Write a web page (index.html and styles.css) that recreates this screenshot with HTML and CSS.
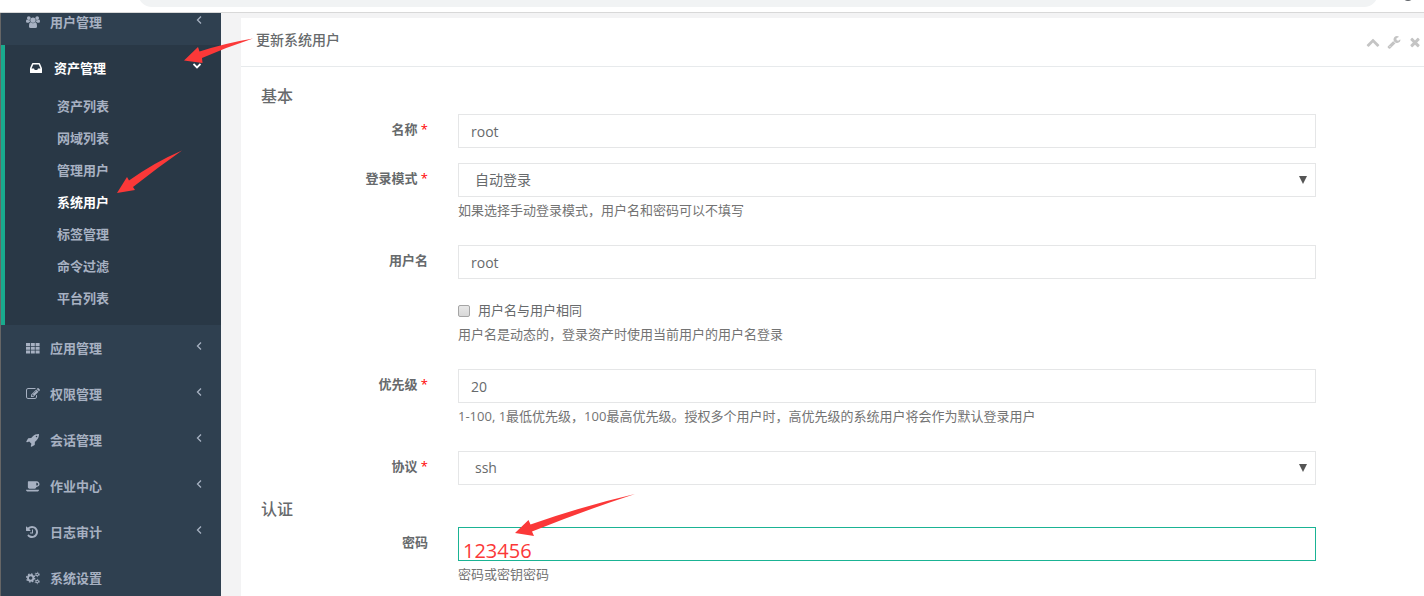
FILE: index.html
```html
<!DOCTYPE html>
<html lang="zh-CN">
<head>
<meta charset="utf-8">
<title>更新系统用户</title>
<link rel="stylesheet" href="styles.css">
</head>
<body>
<div class="browser-bar"><div class="address"></div><div class="avatar"></div></div>
<div class="app">
  <nav class="sidebar">
    <ul class="menu">
      <li><a class="item" href="#">
        <svg class="icon" viewBox="0 0 15 14"><circle cx="7.5" cy="5" r="2.8"/><circle cx="3" cy="2.8" r="2"/><circle cx="12" cy="2.8" r="2"/><path d="M3.2 11.8Q3.2 7.6 5 7.4Q7.5 9.3 10 7.4Q11.800 7.600 11.800 11.800Q11.800 13.500 10 13.500H5Q3.200 13.500 3.200 11.800ZM0 6.500Q0 4.300 1 4.300Q2.500 5.500 4 5Q4 6.200 4.600 6.800Q3.500 6.900 2.800 7.800H1.300Q0 7.800 0 6.500ZM15 6.500Q15 4.300 14 4.300Q12.500 5.500 11 5Q11 6.200 10.400 6.800Q11.500 6.900 12.200 7.800H13.700Q15 7.800 15 6.500Z"/></svg>
        <span>用户管理</span><svg class="arrow" viewBox="0 0 6 8"><path d="M5 .5L1.500 4L5 7.500"/></svg></a></li>
      <li class="active"><a class="item" href="#">
        <svg class="icon" viewBox="128 0 1792 1792"><path fill-rule="evenodd" d="M1151 960H1467L1250 448H542L325 960H641L736 1152H1056ZM1664 990V1472Q1664 1536 1600 1536H192Q128 1536 128 1472V990Q128 928 153 867L391 315Q416 256 480 256H1312Q1376 256 1401 315L1639 867Q1664 928 1664 990Z"/></svg>
        <span>资产管理</span><svg class="arrow down" viewBox="0 0 8 6"><path d="M.5 1L4 4.500L7.500 1"/></svg></a>
        <ul class="submenu">
          <li><a href="#">资产列表</a></li>
          <li><a href="#">网域列表</a></li>
          <li><a href="#">管理用户</a></li>
          <li><a class="current" href="#">系统用户</a></li>
          <li><a href="#">标签管理</a></li>
          <li><a href="#">命令过滤</a></li>
          <li><a href="#">平台列表</a></li>
        </ul></li>
      <li><a class="item" href="#">
        <svg class="icon" viewBox="0 0 14 14"><path d="M0 2h4v3H0zM4.800 2h4v3h-4zM9.600 2h4v3h-4zM0 5.700h4v3H0zM4.800 5.700h4v3h-4zM9.600 5.700h4v3h-4zM0 9.400h4v3H0zM4.800 9.400h4v3h-4zM9.600 9.400h4v3h-4z"/></svg>
        <span>应用管理</span><svg class="arrow" viewBox="0 0 6 8"><path d="M5 .5L1.500 4L5 7.500"/></svg></a></li>
      <li><a class="item" href="#">
        <svg class="icon" viewBox="0 0 1792 1792"><path d="M888 1184l116-116-152-152-116 116v56h96v96h56zm440-720q-16-16-33 1l-350 350q-17 17-1 33t33-1l350-350q17-17 1-33zm80 594v190q0 119-84.500 203.500t-203.500 84.500h-832q-119 0-203.500-84.500t-84.500-203.500v-832q0-119 84.500-203.500t203.500-84.500h832q63 0 117 25 15 7 18 23 3 17-9 29l-49 49q-14 14-32 8-23-6-45-6h-832q-66 0-113 47t-47 113v832q0 66 47 113t113 47h832q66 0 113-47t47-113v-126q0-13 9-22l64-64q15-15 35-7t20 29zm-96-738l288 288-672 672h-288v-288zm444 132l-92 92-288-288 92-92q28-28 68-28t68 28l152 152q28 28 28 68t-28 68z"/></svg>
        <span>权限管理</span><svg class="arrow" viewBox="0 0 6 8"><path d="M5 .5L1.500 4L5 7.500"/></svg></a></li>
      <li><a class="item" href="#">
        <svg class="icon" viewBox="0 0 1792 1792"><path d="M1440 448q0-40-28-68t-68-28-68 28-28 68 28 68 68 28 68-28 28-68zm224-288q0 249-75.500 430.500t-253.500 360.500q-81 80-195 176l-20 379q-2 16-16 26l-384 224q-7 4-16 4-12 0-23-9l-64-64q-13-14-8-32l85-276-281-281-276 85q-3 1-9 1-14 0-23-9l-64-64q-17-19-5-39l224-384q10-14 26-16l379-20q96-114 176-195 188-187 358-258t431-71q14 0 24 9.500t10 22.500z"/></svg>
        <span>会话管理</span><svg class="arrow" viewBox="0 0 6 8"><path d="M5 .5L1.500 4L5 7.500"/></svg></a></li>
      <li><a class="item" href="#">
        <svg class="icon" viewBox="0 0 1920 1792"><path d="M1664 640q0-80-56-136t-136-56h-64v384h64q80 0 136-56t56-136zm-1664 768h1792q0 106-75 181t-181 75h-1280q-106 0-181-75t-75-181zm1856-768q0 159-112.500 271.500t-271.500 112.500h-64v32q0 92-66 158t-158 66h-704q-92 0-158-66t-66-158v-736q0-26 19-45t45-19h1152q159 0 271.500 112.500t112.500 271.500z"/></svg>
        <span>作业中心</span><svg class="arrow" viewBox="0 0 6 8"><path d="M5 .5L1.500 4L5 7.500"/></svg></a></li>
      <li><a class="item" href="#">
        <svg class="icon" viewBox="128 0 1792 1792"><path d="M1664 896q0 156-61 298t-164 245-245 164-298 61q-172 0-327-72.500t-264-204.500q-7-10-6.500-22.500t8.500-20.500l137-138q10-9 25-9 16 2 23 12 73 95 179 147t225 52q104 0 198.500-40.500t163.500-109.500 109.500-163.500 40.500-198.500-40.500-198.500-109.500-163.500-163.500-109.500-198.500-40.500q-98 0-188 35.500t-160 101.500l137 138q31 30 14 69-17 40-59 40h-448q-26 0-45-19t-19-45v-448q0-42 40-59 39-17 69 14l130 129q107-101 244.500-156.500t284.500-55.500q156 0 298 61t245 164 164 245 61 298zm-640-288v448q0 14-9 23t-23 9h-320q-14 0-23-9t-9-23v-64q0-14 9-23t23-9h224v-352q0-14 9-23t23-9h64q14 0 23 9t9 23z"/></svg>
        <span>日志审计</span><svg class="arrow" viewBox="0 0 6 8"><path d="M5 .5L1.500 4L5 7.500"/></svg></a></li>
      <li><a class="item" href="#">
        <svg class="icon gears" viewBox="0 0 15 14"><circle cx="5" cy="7" r="2.900" stroke-width="2"/><circle cx="5" cy="7" r="4.300" stroke-width="1.400" stroke-dasharray="1.700 1.677"/><circle cx="12" cy="3.200" r="1.400" stroke-width="1.100"/><circle cx="12" cy="3.200" r="2.300" stroke-width=".9" stroke-dasharray="1.200 1.209"/><circle cx="12" cy="10.800" r="1.400" stroke-width="1.100"/><circle cx="12" cy="10.800" r="2.300" stroke-width=".9" stroke-dasharray="1.200 1.209"/></svg>
        <span>系统设置</span></a></li>
    </ul>
  </nav>
  <main class="content">
    <section class="panel">
      <header class="panel-head">
        <h1>更新系统用户</h1>
        <div class="tools">
          <button type="button" aria-label="收起"><svg viewBox="0 0 1792 1792"><path d="M1683 1331l-166 165q-19 19-45 19t-45-19l-531-531-531 531q-19 19-45 19t-45-19l-166-165q-19-19-19-45.500t19-45.500l742-741q19-19 45-19t45 19l742 741q19 19 19 45.500t-19 45.500z"/></svg></button>
          <button type="button" aria-label="设置"><svg viewBox="0 0 1792 1792"><path d="M448 1472q0-26-19-45t-45-19-45 19-19 45 19 45 45 19 45-19 19-45zm644-420l-682 682q-37 37-90 37-52 0-91-37l-106-108q-38-36-38-90 0-53 38-91l681-681q39 98 114.500 173.500t173.500 114.500zm634-435q0 39-23 106-47 134-164.500 217.500t-258.500 83.500q-185 0-316.500-131.500t-131.500-316.500 131.500-316.500 316.500-131.500q58 0 121.500 16.500t107.500 46.500q16 11 16 28t-16 28l-293 169v224l193 107q5-3 79-48.500t135.500-81 70.500-35.500q15 0 23.500 10t8.500 25z"/></svg></button>
          <button type="button" aria-label="关闭"><svg viewBox="0 0 1792 1792"><path d="M1490 1322q0 40-28 68l-136 136q-28 28-68 28t-68-28l-294-294-294 294q-28 28-68 28t-68-28l-136-136q-28-28-28-68t28-68l294-294-294-294q-28-28-28-68t28-68l136-136q28-28 68-28t68 28l294 294 294-294q28-28 68-28t68 28l136 136q28 28 28 68t-28 68l-294 294 294 294q28 28 28 68z"/></svg></button>
        </div>
      </header>
      <form class="form">
        <h2>基本</h2>
        <div class="row">
          <label class="name" for="name">名称 <b>*</b></label>
          <div><input class="control" id="name" type="text" value="root"></div>
        </div>
        <div class="row">
          <label class="name" for="mode">登录模式 <b>*</b></label>
          <div>
            <div class="select"><select class="control" id="mode"><option>自动登录</option></select><svg viewBox="0 0 8 8"><path d="M0 0H8L4 8Z"/></svg></div>
            <p class="help">如果选择手动登录模式，用户名和密码可以不填写</p>
          </div>
        </div>
        <div class="row">
          <label class="name" for="username">用户名</label>
          <div><input class="control" id="username" type="text" value="root"></div>
        </div>
        <div class="row">
          <div class="wide">
            <label class="check"><input type="checkbox"><span>用户名与用户相同</span></label>
            <p class="help">用户名是动态的，登录资产时使用当前用户的用户名登录</p>
          </div>
        </div>
        <div class="row">
          <label class="name" for="priority">优先级 <b>*</b></label>
          <div>
            <input class="control" id="priority" type="text" value="20">
            <p class="help">1-100, 1最低优先级，100最高优先级。授权多个用户时，高优先级的系统用户将会作为默认登录用户</p>
          </div>
        </div>
        <div class="row">
          <label class="name" for="protocol">协议 <b>*</b></label>
          <div class="select"><select class="control" id="protocol"><option>ssh</option></select><svg viewBox="0 0 8 8"><path d="M0 0H8L4 8Z"/></svg></div>
        </div>
        <h2>认证</h2>
        <div class="row">
          <label class="name" for="password">密码</label>
          <div class="noted">
            <input class="control focused" id="password" type="password">
            <span class="note">123456</span>
            <p class="help">密码或密钥密码</p>
          </div>
        </div>
      </form>
    </section>
  </main>
</div>
<svg class="pointers" width="700" height="596" viewBox="0 0 700 596">
  <path d="M184 60.500L198 47L199.500 51.500Q226 43 253 38.500Q227 47 202 58L202.500 63Z"/>
  <path d="M117 193L127 177L129 180.500Q155 162 182 150.500Q157 168 133 187L135 190Z"/>
  <path d="M515 533L528.500 520L530.500 524.500Q583 506 635 494Q583 511 532 531.500L534 536Z"/>
</svg>
</body>
</html>
```
FILE: styles.css
```css
* { box-sizing: border-box; }
body {
  margin: 0;
  height: 100vh;
  overflow: hidden;
  display: flex;
  flex-direction: column;
  background: #f3f3f4;
  color: #676a6c;
  font: 13px/18px "Open Sans", "Noto Sans CJK SC", sans-serif;
}
ul, h1, h2, p { margin: 0; padding: 0; list-style: none; }
a { color: inherit; text-decoration: none; }
button, input, select { font: inherit; color: inherit; }

.browser-bar {
  flex: none;
  display: flex;
  gap: 24px;
  height: 13px;
  padding: 0 10px 0 138px;
  background: #fff;
  border-bottom: 1px solid #d8d8d8;
  overflow: hidden;
}
.address { flex: 1; height: 28px; margin-top: -21px; border-radius: 14px; background: #f1f3f4; }
.avatar { width: 12px; height: 12px; margin-top: -11px; border-radius: 6px; background: #5f6368; }

.app { flex: 1; min-height: 0; display: flex; }
.sidebar {
  flex: none;
  width: 221px;
  border-left: 1px solid #666;
  background: #2f4050;
  color: #a7b1c2;
  font-weight: 600;
  overflow: hidden;
}
.menu { margin-top: -14px; }
.item { display: flex; align-items: center; height: 46px; padding: 0 19px 0 25px; }
.item span { padding-bottom: 1px; }
.icon { width: 14px; height: 14px; margin-right: 10px; fill: currentColor; }
.gears { fill: none; stroke: currentColor; }
.arrow { width: 6px; height: 8px; margin: 0 0 4px auto; fill: none; stroke: currentColor; stroke-width: 1.3; }
.arrow.down { width: 8px; height: 6px; stroke-width: 1.8; }
.active { background: #293846; border-left: 4px solid #19aa8d; padding-bottom: 10px; }
.active .item { padding-right: 20px; color: #fff; }
.submenu a { display: block; padding: 6px 10px 8px 52px; }
.submenu .current { color: #fff; }

.content { flex: 1; min-width: 0; padding: 5px 0 0 20px; }
.panel { background: #fff; min-height: 100%; }
.panel-head {
  display: flex;
  justify-content: space-between;
  align-items: center;
  height: 49px;
  padding: 0 2px 0 15px;
  border-bottom: 1px solid #e7eaec;
}
h1 { font-size: 14px; font-weight: 500; line-height: 20px; padding-bottom: 4px; }
.tools { display: flex; gap: 7px; }
.tools button { width: 14px; height: 14px; padding: 0; border: 0; background: none; }
.tools svg { display: block; width: 14px; height: 14px; fill: #c4c4c4; }

.form { padding: 20px 108px 20px 20px; }
h2 { margin-bottom: 9px; font-size: 16px; font-weight: 500; line-height: 18px; }
.row { display: grid; grid-template-columns: 167px 1fr; column-gap: 30px; margin-bottom: 15px; }
.name { padding-top: 6px; text-align: right; font-weight: 600; }
.name b { color: #f00; font-weight: 400; }
.wide { grid-column: 2; padding-top: 7px; }
.control {
  display: block;
  width: 100%;
  height: 34px;
  padding: 0 12px;
  border: 1px solid #e5e6e7;
  border-radius: 0;
  background: #fff;
  font-size: 14px;
  outline: 0;
}
.focused { border-color: #1ab394; }
.select { display: grid; align-items: center; }
.select .control { grid-area: 1 / 1; appearance: none; padding: 0 16px; }
.select svg { grid-area: 1 / 1; justify-self: end; width: 8px; height: 8px; margin-right: 9px; fill: #555; pointer-events: none; }
.help { margin: 4px 0 11px; color: #737373; }
.check { display: flex; align-items: center; gap: 8px; margin-bottom: 6px; }
.check input {
  appearance: none;
  width: 12px;
  height: 12px;
  margin: 2px 0 0;
  border: 1px solid #a5a5a5;
  border-radius: 2px;
  background: linear-gradient(#e8e8e8, #d8d8d8);
}
.noted { position: relative; }
.note { position: absolute; left: 5px; top: 12px; font-size: 20px; line-height: 24px; color: #fb3838; }
.pointers { position: absolute; left: 0; top: 0; fill: #fb3838; pointer-events: none; }
```
